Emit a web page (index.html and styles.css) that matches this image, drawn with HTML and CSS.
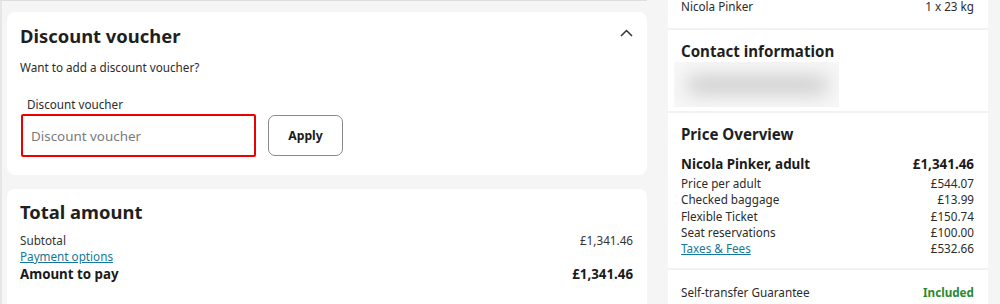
FILE: index.html
```html
<!DOCTYPE html>
<html lang="en">
<head>
<meta charset="utf-8">
<title>Checkout</title>
<link rel="stylesheet" href="styles.css">
</head>
<body>
<div class="page">
  <main class="main">
    <section class="card voucher">
      <div class="card-head">
        <h2 class="card-title">Discount voucher</h2>
        <svg class="chevron" width="13" height="8" viewBox="0 0 13 8" aria-hidden="true">
          <path d="M1 7 L6.5 1.5 L12 7" fill="none" stroke="#333" stroke-width="1.5"/>
        </svg>
      </div>
      <p class="intro">Want to add a discount voucher?</p>
      <label class="field-label" for="voucher">Discount voucher</label>
      <div class="voucher-row">
        <input id="voucher" class="voucher-input" type="text" placeholder="Discount voucher">
        <button class="apply-btn" type="button">Apply</button>
      </div>
    </section>

    <section class="card total">
      <h2 class="card-title">Total amount</h2>
      <div class="total-row">
        <span>Subtotal</span><span>£1,341.46</span>
      </div>
      <div class="total-row">
        <a class="link" href="#">Payment options</a>
      </div>
      <div class="total-row total-pay">
        <span>Amount to pay</span><span>£1,341.46</span>
      </div>
    </section>
  </main>

  <aside class="summary">
    <section class="sum-sec sum-top">
      <div class="sum-row top-row"><span>Nicola Pinker</span><span>1 x 23 kg</span></div>
    </section>
    <section class="sum-sec contact">
      <h3 class="sum-title">Contact information</h3>
      <div class="blurred"><div class="blurred-inner"></div></div>
    </section>
    <section class="sum-sec price">
      <h3 class="sum-title">Price Overview</h3>
      <div class="sum-row person"><span>Nicola Pinker, adult</span><span>£1,341.46</span></div>
      <div class="sum-row"><span>Price per adult</span><span>£544.07</span></div>
      <div class="sum-row"><span>Checked baggage</span><span>£13.99</span></div>
      <div class="sum-row"><span>Flexible Ticket</span><span>£150.74</span></div>
      <div class="sum-row"><span>Seat reservations</span><span>£100.00</span></div>
      <div class="sum-row"><a class="link" href="#">Taxes &amp; Fees</a><span>£532.66</span></div>
    </section>
    <section class="sum-sec guarantee">
      <div class="sum-row"><span>Self-transfer Guarantee</span><span class="included">Included</span></div>
    </section>
  </aside>
</div>
</body>
</html>
```
FILE: styles.css
```css
* { box-sizing: border-box; }

html, body {
  margin: 0;
  padding: 0;
  background: #f5f5f5;
  font-family: "Noto Sans", "Open Sans", Arial, sans-serif;
  color: #1f1f1f;
  overflow: hidden;
}

.page {
  display: flex;
  align-items: flex-start;
  gap: 21px;
  height: 304px;
}

.main {
  width: 647px;
  flex: none;
  border-top: 1px solid #dddddd;
  border-left: 2px solid #e6e6e6;
  padding: 11px 0 0 5px;
  display: flex;
  flex-direction: column;
  gap: 14px;
  height: 304px;
}

.card {
  background: #ffffff;
  border-radius: 8px;
  padding: 10px 14px 18px 13px;
}

.card-head {
  display: flex;
  justify-content: space-between;
  align-items: flex-start;
}

.chevron {
  margin-top: 7px;
  flex: none;
}

.card-title {
  margin: 0;
  font-size: 18.4px;
  line-height: 28px;
  font-weight: 700;
  color: #1f1f1f;
}

.intro {
  margin: 8px 0 0;
  font-size: 11.7px;
  line-height: 18px;
  color: #2b2b2b;
}

.field-label {
  display: block;
  margin-top: 19px;
  padding-left: 7px;
  font-size: 11.7px;
  line-height: 18px;
  color: #2b2b2b;
}

.voucher-row {
  display: flex;
  align-items: center;
  gap: 12px;
  margin-top: 1px;
  margin-left: 1px;
}

.voucher-input {
  width: 235px;
  height: 43px;
  border: 2px solid #ec0000;
  border-radius: 2px;
  padding: 0 8px;
  font-family: inherit;
  font-size: 13.4px;
  color: #1f1f1f;
  background: #fff;
  outline: none;
}

.voucher-input::placeholder {
  color: #7a7a7a;
}

.apply-btn {
  width: 75px;
  height: 41px;
  border: 1px solid #8a8a8a;
  border-radius: 7px;
  background: #fff;
  font-family: inherit;
  font-size: 12.2px;
  font-weight: 700;
  color: #1a1a1a;
  padding: 0;
}

.total {
  flex: 1;
  padding-top: 9px;
  border-radius: 8px 8px 0 0;
}

.total-row {
  display: flex;
  justify-content: space-between;
  font-size: 11.7px;
  line-height: 16px;
  color: #333333;
}

.total-row:first-of-type {
  margin-top: 6px;
}

.total-pay {
  font-size: 13.3px;
  line-height: 20px;
  font-weight: 700;
  color: #1a1a1a;
}

.link {
  color: #17779a;
  text-decoration: underline;
}

.summary {
  width: 320px;
  flex: none;
  background: #ffffff;
  height: 304px;
}

.sum-sec {
  padding: 0 14px 0 13px;
}

.sum-sec + .sum-sec {
  border-top: 2px solid #f2f2f2;
}

.sum-row {
  display: flex;
  justify-content: space-between;
  font-size: 11.7px;
  line-height: 16.25px;
  color: #2b2b2b;
}

.sum-top {
  padding-top: 1px;
  padding-bottom: 17px;
}

.top-row {
  line-height: 10px;
}

.sum-title {
  margin: 0;
  font-size: 15.1px;
  line-height: 22px;
  font-weight: 700;
  color: #1f1f1f;
}

.contact {
  padding-top: 10px;
  padding-bottom: 4px;
}

.blurred {
  width: 165px;
  height: 45px;
  margin-left: -7px;
  background: #f7f7f7;
  overflow: hidden;
}

.blurred-inner {
  margin: 13px 10px 0 12px;
  height: 20px;
  border-radius: 10px;
  background: #d0d0d0;
  filter: blur(9px);
}

.price {
  padding-top: 10px;
  padding-bottom: 12px;
}

.person {
  margin-top: 10px;
  margin-bottom: 1px;
  font-size: 13.4px;
  line-height: 19px;
  font-weight: 700;
  color: #1a1a1a;
}

.guarantee {
  padding-top: 14px;
}

.included {
  color: #2a8a2e;
  font-weight: 700;
}
```
